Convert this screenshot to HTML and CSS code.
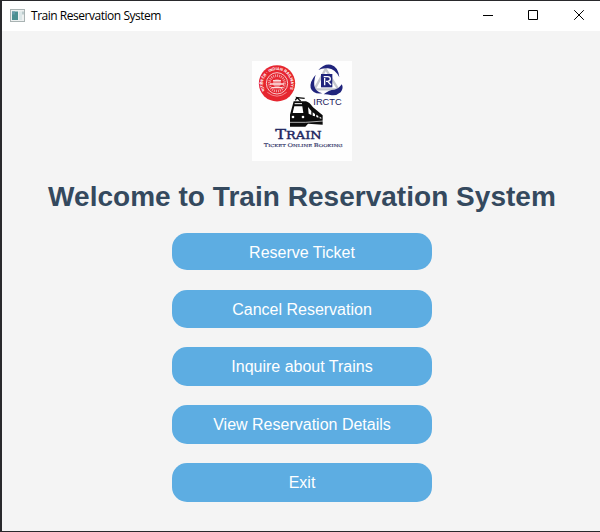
FILE: index.html
```html
<!DOCTYPE html>
<html lang="en">
<head>
<meta charset="utf-8">
<title>Train Reservation System</title>
<link rel="stylesheet" href="styles.css">
</head>
<body>
<div class="window">
  <header class="titlebar">
    <svg class="app-icon" viewBox="0 0 15 13">
      <rect x=".5" y=".5" width="14" height="12" fill="#eef1f1" stroke="#a9b3b3"/>
      <rect x="2" y="2.500" width="6" height="8.500" fill="#4c8f91"/>
      <rect x="2" y="2.500" width="3" height="3" fill="#659aa8"/>
      <rect x="9" y="2.500" width="3" height="8.500" fill="#dce7e8"/>
      <rect x="12.500" y="2.500" width="1" height="3" fill="#88a6a9"/>
    </svg>
    <span class="title">Train Reservation System</span>
    <div class="controls">
      <svg viewBox="0 0 12 12"><path d="M0 6.500H10"/></svg>
      <svg viewBox="0 0 12 12"><path d="M.5 1.500H9.500V10.500H.5Z"/></svg>
      <svg viewBox="0 0 12 12"><path d="M1.200 1.200L10.800 10.800M10.800 1.200L1.200 10.800"/></svg>
    </div>
  </header>
  <main class="content">
    <svg class="logo" viewBox="12 15 300 300">
      <defs>
        <path id="ring" d="M50 104A42 42 0 1 1 124 104"/>
      </defs>
      <rect x="12" y="15" width="300" height="300" fill="#fefefe"/>
      <circle cx="87" cy="82" r="54.500" fill="#e6262f"/>
      <circle cx="87" cy="82" r="32" fill="none" stroke="#f8c8ca" stroke-width="3"/>
      <circle cx="87" cy="82" r="23" fill="none" stroke="#f3a3a7" stroke-width="8" stroke-dasharray="3 3"/>
      <circle cx="87" cy="82" r="12" fill="#ef8388"/>
      <path d="M66 84H108M70 95H104M75 74H99" stroke="#fbdcdd" stroke-width="4"/>
      <path d="M58 109Q87 132 116 109" fill="none" stroke="#f18a90" stroke-width="3"/>
      <text class="ring-text"><textPath href="#ring" textLength="168" lengthAdjust="spacingAndGlyphs">भारतीय रेल · INDIAN RAILWAYS</textPath></text>

      <g class="emblem">
        <path d="M233 39L271 100H199Z" fill="none" stroke="#c5c7ce" stroke-width="7"/>
        <path d="M211 42Q228 22 249 26Q270 31 274 64Q261 39 240 37Q224 35 211 42Z" fill="#20247c"/>
        <path d="M203 56Q184 78 188 96Q194 115 223 112Q203 106 200 93Q196 79 203 56Z" fill="#20247c"/>
        <path d="M227 115Q242 101 259 101Q272 99 281 85Q288 95 278 109Q264 121 247 117Q237 114 227 115Z" fill="#20247c"/>
        <path d="M219 54H253V94H219Z" fill="#20247c"/>
        <path d="M227 62H239Q247 62 247 69Q247 75 239 76L249 87M230 66V88M234 76H240" fill="none" stroke="#fff" stroke-width="4"/>
      </g>
      <text class="irctc" x="196" y="147" textLength="85" lengthAdjust="spacingAndGlyphs">IRCTC</text>

      <g>
        <path d="M170 127L147 125L158 136M147 125L142 133" fill="none" stroke="#111" stroke-width="4"/>
        <path d="M137 136H174Q184 138 195 154L224 178V206L180 203L172 212H126V176Z" fill="#0c0c0c"/>
        <path d="M139 151H163L166 171H134Z" fill="#fff"/>
        <path d="M140 143H162" stroke="#fff" stroke-width="3"/>
        <path d="M180 153L190 165V177L182 173ZM194 169L201 174V181L194 179ZM205 176L211 180V185L205 183ZM215 182L220 185V188L215 187Z" fill="#fff"/>
        <circle cx="135" cy="183" r="4" fill="#fff"/>
        <circle cx="165" cy="183" r="4" fill="#fff"/>
        <path d="M120 199H173L226 195" fill="none" stroke="#fff" stroke-width="2"/>
      </g>
      <text class="brand" x="82" y="250" textLength="139" lengthAdjust="spacingAndGlyphs"><tspan class="brand-cap">T</tspan>RAIN</text>
      <text class="tagline" x="47" y="272" textLength="237" lengthAdjust="spacingAndGlyphs"><tspan class="tag-cap">T</tspan>ICKET <tspan class="tag-cap">O</tspan>NLINE <tspan class="tag-cap">B</tspan>OOKING</text>
    </svg>
    <h1>Welcome to Train Reservation System</h1>
    <nav class="menu">
      <button class="first">Reserve Ticket</button>
      <button class="second">Cancel Reservation</button>
      <button>Inquire about Trains</button>
      <button>View Reservation Details</button>
      <button>Exit</button>
    </nav>
  </main>
</div>
</body>
</html>
```

FILE: styles.css
```css
* { box-sizing: border-box; }

body {
  margin: 0;
  height: 532px;
  padding: 1px 0 1px 2px;
  background: #29292c;
  overflow: hidden;
}

.window {
  height: 530px;
  background: #f4f4f4;
}

.titlebar {
  display: flex;
  align-items: center;
  height: 30px;
  padding: 0 15px 2px 8px;
  background: #fff;
}

.app-icon {
  width: 15px;
  height: 13px;
}

.title {
  margin-left: 6px;
  font: 12px/16px "Open Sans", "Noto Sans", sans-serif;
  letter-spacing: -0.47px;
  color: #000;
  padding-top: 2px;
}

.controls {
  display: flex;
  gap: 33px;
  margin-left: auto;
}

.controls svg {
  display: block;
  width: 12px;
  height: 12px;
  fill: none;
  stroke: #000;
  stroke-width: 1;
}

.content {
  display: flex;
  flex-direction: column;
  align-items: center;
  padding: 30px 0 0 2px;
}

.logo {
  display: block;
  width: 100px;
  height: 100px;
}

.ring-text {
  font: bold 12px "Liberation Sans", sans-serif;
  fill: #fff;
}

.irctc {
  font: 25px "Liberation Sans", sans-serif;
  fill: #20205c;
}

.brand {
  font: 32px "DejaVu Serif", serif;
  fill: #20265f;
  stroke: #20265f;
  stroke-width: 1.2px;
}

.brand-cap { font-size: 40px; }

.tagline {
  font: 12px "DejaVu Serif", serif;
  fill: #34386a;
  stroke: #34386a;
  stroke-width: 0.4px;
}

.tag-cap { font-size: 15px; }

h1 {
  margin: 17px 0 0;
  font: bold 28px/38px "Liberation Sans", Arial, sans-serif;
  letter-spacing: 0.03px;
  color: #34495e;
  white-space: nowrap;
}

.menu {
  display: flex;
  flex-direction: column;
  gap: 19px;
  width: 260px;
  margin-top: 17px;
}

.menu button {
  height: 39px;
  padding: 0;
  border: 0;
  border-radius: 15px;
  background: #5dade2;
  color: #fff;
  font: 16px/20px "Liberation Sans", Arial, sans-serif;
}

.menu .first {
  height: 37px;
  margin-bottom: 1px;
  padding-top: 2px;
}

.menu .second {
  height: 38px;
  padding-top: 1px;
}
```
